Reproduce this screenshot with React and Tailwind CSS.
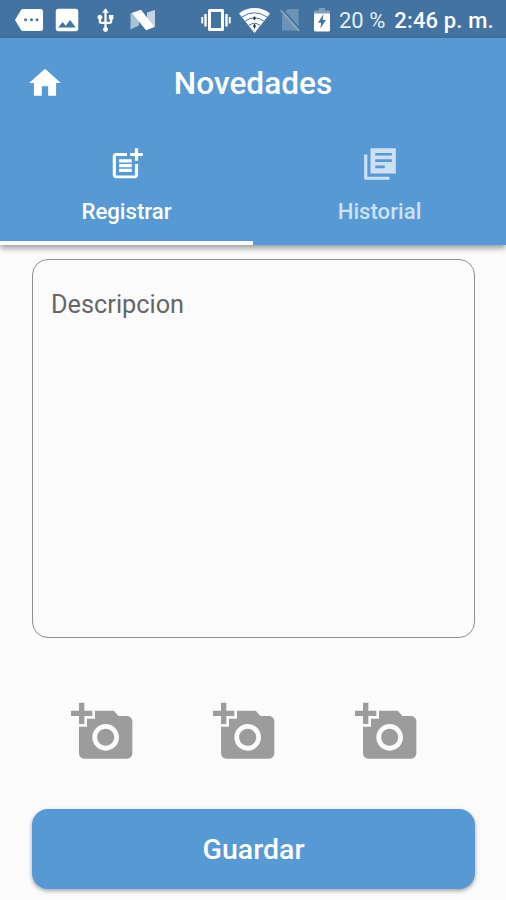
import { useState } from 'react'
import { MdHome, MdPostAdd, MdAddAPhoto, MdPhoto, MdUsb } from 'react-icons/md'

function LibraryIcon({ className }) {
  return (
    <svg className={className} viewBox="0 0 24 24" fill="currentColor">
      <path d="M4 6H2v16h16v-2H4z" />
      <path d="M6 2h16v16H6zm3 3v1.700h10.500V5zm0 4v1.700h10.500V9zm0 4v1.700h6V13z" fillRule="evenodd" />
    </svg>
  );
}

const TABS = [
  { id: 'registrar', label: 'Registrar', Icon: MdPostAdd },
  { id: 'historial', label: 'Historial', Icon: LibraryIcon },
];

function MoreIcon() {
  return (
    <svg className="ml-[15px] h-[22px] w-[28px]" viewBox="0 0 28 22" fill="#fff">
      <path d="M8 0h17.500a2.500 2.500 0 0 1 2.500 2.500v17a2.500 2.500 0 0 1-2.500 2.500H8q-1.300 0-2-1L0 11 6 1q.7-1 2-1z" />
      <g fill="#4273a1">
        <circle cx="10.500" cy="10.800" r="1.500" />
        <circle cx="16.500" cy="10.800" r="1.500" />
        <circle cx="22" cy="10.800" r="1.500" />
      </g>
    </svg>
  );
}

function NougatIcon() {
  return (
    <svg className="ml-[11px] h-[22px] w-[26px]" viewBox="0 0 26 22">
      <path d="M.500 4.500 9 1.500v15L.500 20.500z" fill="#a9c1d7" />
      <path d="M17 3.500 25 1v16.500l-8 3z" fill="#c3d4e4" />
      <path d="M2 4 11 .8 24.500 18 16 21.300z" fill="#fff" />
    </svg>
  );
}

function VibrateIcon() {
  return (
    <svg className="ml-[45px] h-[24px] w-[30px]" viewBox="0 0 30 24" fill="#fff">
      <path d="M8.500 1h13a1.500 1.500 0 0 1 1.500 1.500v19a1.500 1.500 0 0 1-1.500 1.500h-13A1.500 1.500 0 0 1 7 21.500v-19A1.500 1.500 0 0 1 8.500 1zm1.500 3v16h10v-16z" fillRule="evenodd" />
      <path d="M3.300 6h2.400v12.500H3.300zM.3 9h1.900v6.500H.3zM24.300 6h2.400v12.500h-2.400zM27.800 9h1.900v6.500h-1.900z" />
    </svg>
  );
}

function WifiIcon() {
  return (
    <svg className="ml-[8px] h-[25px] w-[31px]" viewBox="0 0 31 25">
      <path d="M15.500 25 0 5.500Q6.500 0 15.500 0T31 5.500z" fill="#fff" />
      <g fill="none" stroke="#4273a1" strokeWidth="1">
        <path d="M3 9q12.500-8.500 25 0" />
        <path d="M6.300 13q9.200-6.500 18.400 0" />
        <path d="M10 17.300q5.500-4 11 0" />
      </g>
      <path d="M15.500 8.500v3.500M14 10.200h3M15.500 16v4.500M14 18.200h3" stroke="#24384c" strokeWidth="1.300" fill="none" />
    </svg>
  );
}

function NoSimIcon() {
  return (
    <svg className="ml-[10px] h-[24px] w-[20px]" viewBox="0 0 20 24">
      <path d="M8 1h10.500v21.500H2V7z" fill="#6e93b6" />
      <path d="M1 0 20 21" stroke="#4273a1" strokeWidth="1.800" />
      <path d="M.5 2 19 23" stroke="#8dabc6" strokeWidth="1.500" />
    </svg>
  );
}

function BatteryIcon() {
  return (
    <svg className="ml-[14px] h-[24px] w-[16px]" viewBox="0 0 16 24">
      <path d="M5 0h6v2.500h4q1 0 1 1V7H0V3.500q0-1 1-1h4z" fill="#7f9fbd" />
      <path d="M0 5.500h16V22q0 1.500-1.500 1.500h-13Q0 23.500 0 22z" fill="#fff" />
      <path d="M9.500 6 4 14.800h3.200L6.300 20.500 12 12H8.700z" fill="#4273a1" />
    </svg>
  );
}

function StatusBar() {
  return (
    <div className="flex h-[38px] items-center bg-[#4273a1] pt-[2px] text-white">
      <MoreIcon />
      <MdPhoto className="ml-[9px] h-[30px] w-[30px] shrink-0" />
      <MdUsb className="ml-[10px] h-[27px] w-[27px] shrink-0" />
      <NougatIcon />
      <VibrateIcon />
      <WifiIcon />
      <NoSimIcon />
      <BatteryIcon />
      <span className="ml-[9px] text-[22px] whitespace-nowrap text-[#e3edf6]">20 %</span>
      <span className="ml-[9px] text-[22px] font-medium tracking-[0.15px] whitespace-nowrap">2:46 p. m.</span>
    </div>
  );
}

export default function App() {
  const [tab, setTab] = useState('registrar');
  const [descripcion, setDescripcion] = useState('');

  return (
    <main className="flex h-[900px] w-[506px] flex-col overflow-hidden bg-[#fbfbfb] font-['Roboto',sans-serif]">
      <StatusBar />

      <header className="bg-[#5699d4] text-white shadow-[0_3px_6px_rgba(0,0,0,0.4)]">
        <div className="grid h-[89px] grid-cols-[90px_1fr_90px] items-center">
          <button className="flex justify-center">
            <MdHome className="h-[38px] w-[38px]" />
          </button>
          <h1 className="pt-[2px] text-center text-[31.6px] font-medium">Novedades</h1>
        </div>

        {/* tabs */}
        <nav className="grid h-[118px] grid-cols-2">
          {TABS.map(({ id, label, Icon }) => (
            <button
              key={id}
              onClick={() => setTab(id)}
              className={`flex flex-col items-center border-b-[4px] pt-[18px] ${
                tab === id ? 'border-white text-white' : 'border-transparent text-[#cde1f3]'
              }`}
            >
              <Icon className="h-[38px] w-[38px]" />
              <span className="mt-[12px] text-[22.2px] leading-[32px] font-medium">{label}</span>
            </button>
          ))}
        </nav>
      </header>

      <div className="flex flex-col px-8 pt-[14px]">
        <textarea
          value={descripcion}
          onChange={(e) => setDescripcion(e.target.value)}
          placeholder="Descripcion"
          className="h-[379px] w-[443px] resize-none rounded-[16px] border border-[#8f8f8f] px-[18px] pt-[29px] text-[25.3px] leading-[32px] placeholder:text-[#666666]"
        />

        {/* fotos */}
        <div className="mt-[62px] flex justify-center gap-[78px] pr-[16px] text-[#9c9c9c]">
          {[1, 2, 3].map((n) => (
            <button key={n}>
              <MdAddAPhoto className="h-[64px] w-[64px]" />
            </button>
          ))}
        </div>

        <button className="mt-[45px] h-[80px] w-[443px] rounded-[16px] bg-[#5699d4] pt-[2px] text-[28.5px] font-medium text-white shadow-[0_2px_4px_rgba(0,0,0,0.35)]">
          Guardar
        </button>
      </div>
    </main>
  );
}
